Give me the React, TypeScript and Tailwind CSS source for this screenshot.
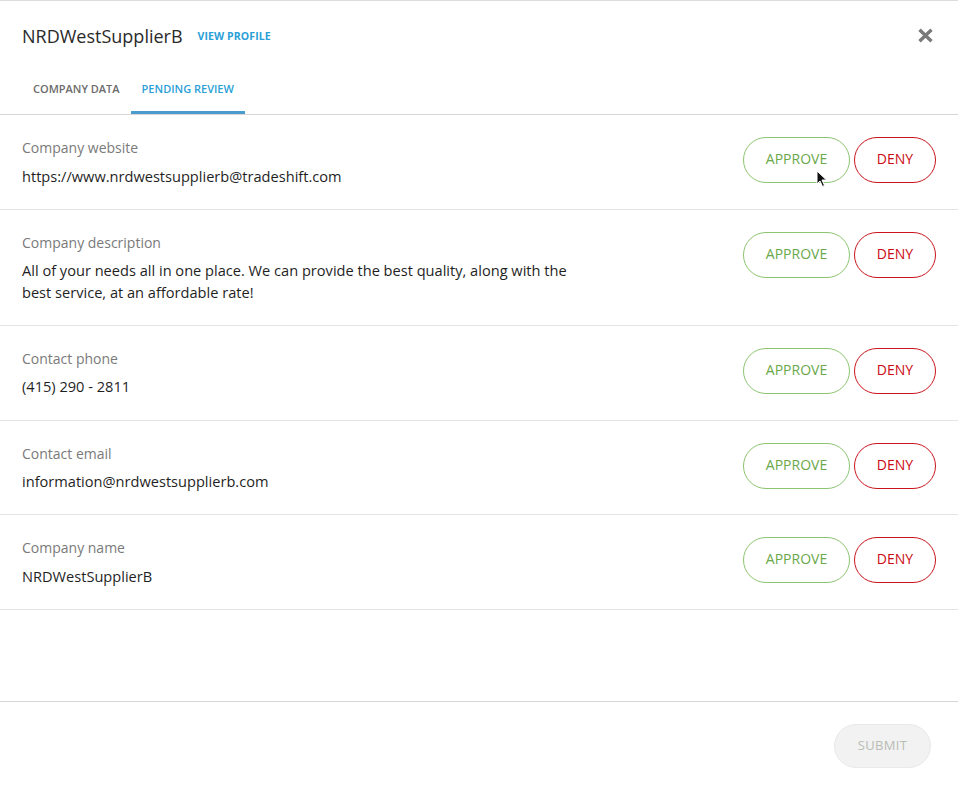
import React from "react";

const rows: { label: string; value: string[] }[] = [
  { label: "Company website", value: ["https://www.nrdwestsupplierb@tradeshift.com"] },
  {
    label: "Company description",
    value: [
      "All of your needs all in one place. We can provide the best quality, along with the",
      "best service, at an affordable rate!",
    ],
  },
  { label: "Contact phone", value: ["(415) 290 - 2811"] },
  { label: "Contact email", value: ["information@nrdwestsupplierb.com"] },
  { label: "Company name", value: ["NRDWestSupplierB"] },
];

export default function App() {
  return (
    <div
      className="relative w-[958px] h-[790px] bg-white border-t border-[#dcdcdc] flex flex-col overflow-hidden"
      style={{ fontFamily: '"Open Sans", "Liberation Sans", sans-serif' }}
    >
      {/* header */}
      <div className="flex items-center justify-between pl-[22px] pr-[24px] pt-[23px]">
        <div className="flex items-center">
          <span className="text-[18px] leading-[24px] text-[#2a2a2a]">NRDWestSupplierB</span>
          <span className="ml-[15px] mt-[1px] text-[10.5px] font-bold text-[#2a9fd8] tracking-[0.1px]">VIEW PROFILE</span>
        </div>
        <svg width="17" height="15" viewBox="0 0 17 15" className="mt-[-1px]">
          <path d="M2.5 1.8 L14.5 13.2 M14.5 1.8 L2.5 13.2" stroke="#7a7a7a" strokeWidth="3.4" strokeLinecap="butt" />
        </svg>
      </div>

      {/* tabs */}
      <div className="mt-[33px] flex pl-[22px] border-b border-[#d6d6d6]">
        <div className="px-[11px] pb-[14px] border-b-[3px] border-transparent text-[11px] leading-[16px] font-semibold text-[#6b6b6b]">
          COMPANY DATA
        </div>
        <div className="px-[11px] pb-[14px] border-b-[3px] border-[#4a9ccf] text-[11px] leading-[16px] font-semibold text-[#2a9fd8]">
          PENDING REVIEW
        </div>
      </div>

      {/* rows */}
      <div className="flex flex-col">
        {rows.map((r) => (
          <div key={r.label} className="flex justify-between pl-[22px] pr-[22px] border-b border-[#e4e4e4]">
            <div className={`pt-[23px] w-[600px] ${r.value.length > 1 ? "pb-[21.5px]" : "pb-[22.25px]"}`}>
              <div className="text-[14px] leading-[20px] text-[#7a7a7a]">{r.label}</div>
              <div className="mt-[6.5px] text-[14.6px] leading-[22px] text-[#1f1f1f]">
                {r.value.map((v, i) => (
                  <div key={i} className="whitespace-nowrap">{v}</div>
                ))}
              </div>
            </div>
            <div className="pt-[22px] flex gap-[4px]">
              <button className="h-[46px] w-[107px] rounded-full border border-[#8cc46f] bg-white text-[14px] leading-[20px] pb-[2px] text-[#6aa84a]">
                APPROVE
              </button>
              <button className="h-[46px] w-[82px] rounded-full border border-[#c8141c] bg-white text-[14px] leading-[20px] pb-[2px] text-[#cc0a14]">
                DENY
              </button>
            </div>
          </div>
        ))}
      </div>

      <div className="flex-1" />

      {/* footer */}
      <div className="h-[89px] border-t border-[#d6d6d6] flex justify-end pr-[27px] pt-[22px]">
        <button className="h-[44px] w-[97px] rounded-full border border-[#e8e9e8] bg-[#f1f2f1] text-[13px] text-[#b9bcb6] tracking-[0.3px]">
          SUBMIT
        </button>
      </div>

      {/* mouse cursor */}
      <svg className="absolute left-[816px] top-[169px]" width="12" height="18" viewBox="0 0 12 18">
        <path d="M1 1 L1 14 L4 11 L6.5 16.5 L8.5 15.5 L6 10 L10.5 10 Z" fill="#111" stroke="#fff" strokeWidth="1" />
      </svg>
    </div>
  );
}
